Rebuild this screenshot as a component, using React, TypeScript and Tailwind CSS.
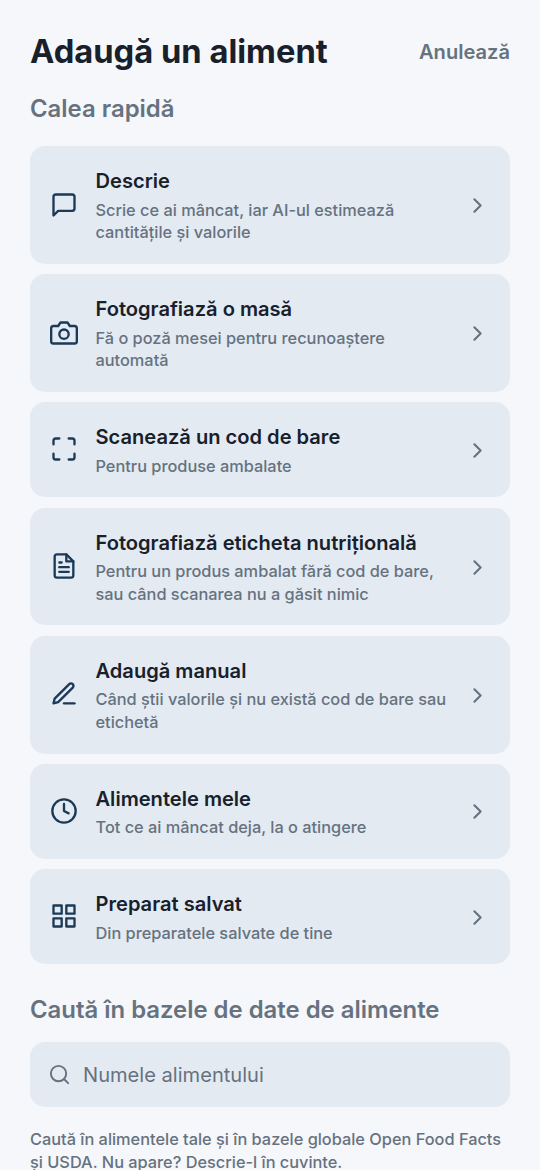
import type { IconType } from "react-icons";
import {
  FiCamera,
  FiChevronRight,
  FiClock,
  FiEdit3,
  FiFileText,
  FiGrid,
  FiMaximize,
  FiMessageSquare,
  FiSearch,
} from "react-icons/fi";

const options: { icon: IconType; title: string; text: string }[] = [
  { icon: FiMessageSquare, title: "Descrie", text: "Scrie ce ai mâncat, iar AI-ul estimează cantitățile și valorile" },
  { icon: FiCamera, title: "Fotografiază o masă", text: "Fă o poză mesei pentru recunoaștere automată" },
  { icon: FiMaximize, title: "Scanează un cod de bare", text: "Pentru produse ambalate" },
  { icon: FiFileText, title: "Fotografiază eticheta nutrițională", text: "Pentru un produs ambalat fără cod de bare, sau când scanarea nu a găsit nimic" },
  { icon: FiEdit3, title: "Adaugă manual", text: "Când știi valorile și nu există cod de bare sau etichetă" },
  { icon: FiClock, title: "Alimentele mele", text: "Tot ce ai mâncat deja, la o atingere" },
  { icon: FiGrid, title: "Preparat salvat", text: "Din preparatele salvate de tine" },
];

function OptionCard({ icon: Icon, title, text }: { icon: IconType; title: string; text: string }) {
  return (
    <button className="flex w-full items-center rounded-[15px] bg-[#e3eaf2] p-5 text-left">
      <Icon className="mb-px size-7 shrink-0 text-[#1b3a57]" />
      <div className="ml-[17.5px] mr-3 flex-1">
        <h3 className="text-[20.1px] leading-[30.1px] font-semibold text-[#18202c]">{title}</h3>
        <p className="mt-[2.5px] text-[16.34px] leading-[22.6px] font-medium text-[#66727f]">{text}</p>
      </div>
      <FiChevronRight className="mt-px mr-[0.5px] size-[25px] shrink-0 text-[#66727f]" />
    </button>
  );
}

export default function App() {
  return (
    <div className="h-[1170px] overflow-hidden bg-[#f5f7fb] px-[30px] pt-[30px] font-['Inter',sans-serif]">
      <header className="flex items-center justify-between">
        <h1 className="text-[32.7px] leading-[42px] font-bold text-[#18202c]">Adaugă un aliment</h1>
        <button className="pt-px text-[20.1px] leading-[30px] font-semibold text-[#66727f]">Anulează</button>
      </header>

      <h2 className="mt-[21px] text-[23.9px] leading-[32px] font-semibold text-[#66727f]">Calea rapidă</h2>

      <div className="mt-[21.2px] flex flex-col gap-[10.25px]">
        {options.map((option) => (
          <OptionCard key={option.title} {...option} />
        ))}
      </div>

      <h2 className="mt-[29.6px] text-[23.9px] leading-[32px] font-semibold text-[#66727f]">
        Caută în bazele de date de alimente
      </h2>

      <div className="mt-4 flex h-[65px] items-center rounded-[15px] bg-[#e3eaf2] px-[18px] pt-px">
        <FiSearch className="size-[23px] text-[#66727f]" />
        <span className="ml-3 text-[20.1px] text-[#66727f]">Numele alimentului</span>
      </div>

      <p className="mt-[21px] text-[16.34px] leading-[22.6px] font-medium text-[#66727f]">
        Caută în alimentele tale și în bazele globale Open Food Facts și USDA. Nu apare? Descrie-l în cuvinte.
      </p>
    </div>
  );
}
